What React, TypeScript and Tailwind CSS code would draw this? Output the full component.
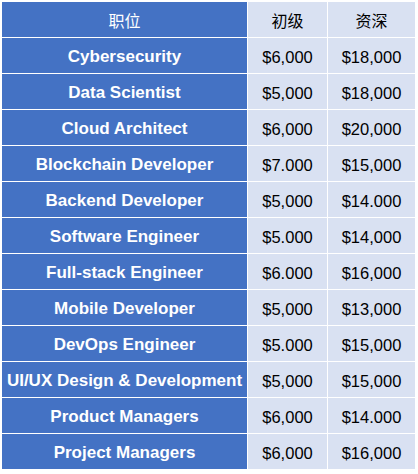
import React from "react";

const rows: [string, string, string][] = [
  ["Cybersecurity", "$6,000", "$18,000"],
  ["Data Scientist", "$5,000", "$18,000"],
  ["Cloud Architect", "$6,000", "$20,000"],
  ["Blockchain Developer", "$7.000", "$15,000"],
  ["Backend Developer", "$5,000", "$14.000"],
  ["Software Engineer", "$5.000", "$14,000"],
  ["Full-stack Engineer", "$6.000", "$16,000"],
  ["Mobile Developer", "$5,000", "$13,000"],
  ["DevOps Engineer", "$5.000", "$15,000"],
  ["UI/UX Design & Development", "$5,000", "$15,000"],
  ["Product Managers", "$6,000", "$14.000"],
  ["Project Managers", "$6,000", "$16,000"],
];

export default function App() {
  return (
    <div className="w-[418px] h-[474px] bg-white pt-[2px] pl-[2px]">
      <div
        className="grid grid-cols-[245px_79px_87px] gap-[1px] auto-rows-[35px]"
        style={{ fontFamily: '"Liberation Sans", Arial, "Noto Sans CJK SC", sans-serif' }}
      >
        <div className="bg-[#4472c4] text-white flex items-center justify-center text-[16px] pt-[1px]" style={{ fontFamily: '"Noto Sans CJK SC", sans-serif' }}>职位</div>
        <div className="bg-[#d9e1f2] text-black flex items-center justify-center text-[16px] pt-[1px]" style={{ fontFamily: '"Noto Sans CJK SC", sans-serif' }}>初级</div>
        <div className="bg-[#d9e1f2] text-black flex items-center justify-center text-[16px] pt-[1px]" style={{ fontFamily: '"Noto Sans CJK SC", sans-serif' }}>资深</div>
        {rows.map(([t, a, b]) => (
          <React.Fragment key={t}>
            <div className="bg-[#4472c4] text-white font-bold flex items-center justify-center text-[17px] whitespace-nowrap pt-[3px]">{t}</div>
            <div className="bg-[#d9e1f2] text-black flex items-center justify-center text-[16.5px] pt-[3px]">{a}</div>
            <div className="bg-[#d9e1f2] text-black flex items-center justify-center text-[16.5px] pt-[3px]">{b}</div>
          </React.Fragment>
        ))}
      </div>
    </div>
  );
}
